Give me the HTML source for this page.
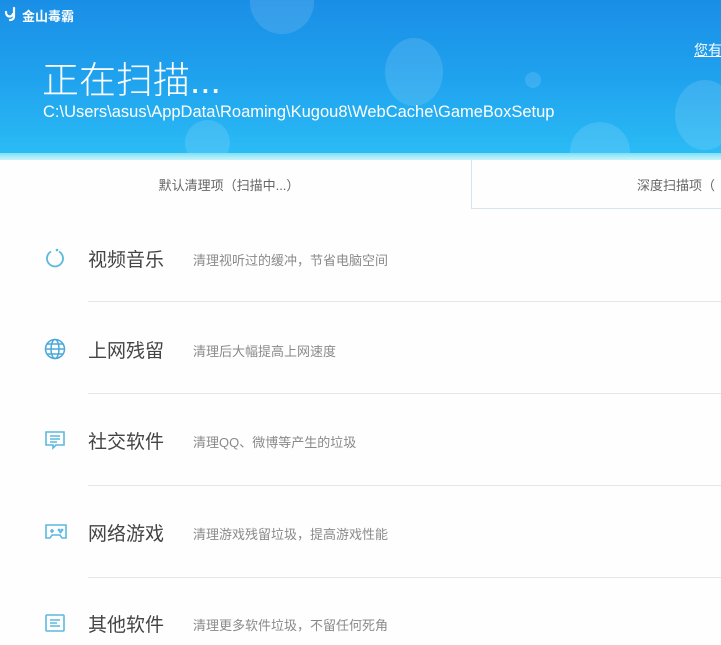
<!DOCTYPE html>
<html><head><meta charset="utf-8"><style>
body{margin:0;width:721px;height:645px;overflow:hidden;background:#fefefe;font-family:"Liberation Sans","Noto Sans CJK SC",sans-serif;position:relative}
.hdr{position:absolute;left:0;top:0;width:721px;height:156px;background:linear-gradient(180deg,#1a8ee6 0%,#1fa2ee 50%,#2bbcf5 100%);overflow:hidden}
.strip{position:absolute;left:0;top:153px;width:721px;height:7px;background:linear-gradient(180deg,#7fe0f6,#c8f4fb)}
.b{position:absolute;border-radius:50%;background:rgba(255,255,255,0.12)}
.logo{position:absolute;left:22px;top:6px;color:#fff;font-size:13px;font-weight:bold;white-space:nowrap}
.t{position:absolute;left:42px;top:50px;color:#fff;font-size:37px;font-weight:300;letter-spacing:0px;white-space:nowrap}
.p{position:absolute;left:43px;top:103px;color:#fff;font-size:16.5px;white-space:nowrap}
.r{position:absolute;left:694px;top:40px;color:#fff;font-size:14px;text-decoration:underline;white-space:nowrap}
.tab1{position:absolute;left:0;top:160px;width:458px;height:50px;line-height:52px;text-align:center;color:#666;font-size:13px}
.tab2{position:absolute;left:471px;top:160px;width:260px;height:49px;border-left:1px solid #d8e4ea;border-bottom:1px solid #d8e4ea;line-height:52px;color:#666;font-size:13px;padding-left:165px;box-sizing:border-box;white-space:nowrap}
.row{position:absolute;left:0;width:721px}
.ic{position:absolute;left:44px;top:-11px}
.nm{position:absolute;left:88px;top:-13px;font-size:19px;color:#444}
.ds{position:absolute;left:193px;top:-8px;font-size:13px;color:#8a8a8a}
.sep{position:absolute;left:88px;width:633px;height:1px;background:#e6e6e6}
</style></head><body>
<div class="hdr">
<div class="b" style="left:250px;top:-30px;width:64px;height:64px"></div>
<div class="b" style="left:385px;top:38px;width:58px;height:68px"></div>
<div class="b" style="left:525px;top:72px;width:16px;height:16px"></div>
<div class="b" style="left:675px;top:80px;width:60px;height:70px"></div>
<div class="b" style="left:570px;top:122px;width:60px;height:60px"></div>
<div class="b" style="left:185px;top:120px;width:45px;height:45px"></div>
<svg style="position:absolute;left:4px;top:6px" width="16" height="16" viewBox="0 0 16 16" fill="none" stroke="#fff" stroke-width="2.2" stroke-linecap="round"><path d="M2 6c0 5 5 6 7 2M10 2v8c0 3-2 4-4 4"/></svg>
<div class="logo">金山毒霸</div>
<div class="t">正在扫描...</div>
<div class="p">C:\Users\asus\AppData\Roaming\Kugou8\WebCache\GameBoxSetup</div>
<div class="r">您有</div>
</div>
<div class="strip"></div>
<div class="tab1">默认清理项（扫描中...）</div>
<div class="tab2">深度扫描项（</div>

<div class="row" style="top:258px">
<svg class="ic" width="22" height="22" viewBox="0 0 22 22"><path d="M7 4.5A8 8 0 1 0 15 4.5" fill="none" stroke="#5bb8df" stroke-width="1.8"/><circle cx="13" cy="3" r="1.3" fill="#5bb8df"/></svg>
<div class="nm">视频音乐</div><div class="ds">清理视听过的缓冲，节省电脑空间</div></div>
<div class="sep" style="top:301px"></div>
<div class="row" style="top:349px">
<svg class="ic" width="22" height="22" viewBox="0 0 22 22" fill="none" stroke="#4aa8d8" stroke-width="1.5"><circle cx="11" cy="11" r="9.5"/><ellipse cx="11" cy="11" rx="4" ry="9.5"/><path d="M1.5 11h19M3 6h16M3 16h16"/></svg>
<div class="nm">上网残留</div><div class="ds">清理后大幅提高上网速度</div></div>
<div class="sep" style="top:393px"></div>
<div class="row" style="top:440px">
<svg class="ic" width="22" height="22" viewBox="0 0 22 22" fill="none" stroke="#5bb8df" stroke-width="1.6"><path d="M2 3h18v13h-8l-3 3v-3H2z"/><path d="M6 7h10M6 10h10M6 13h7"/></svg>
<div class="nm">社交软件</div><div class="ds">清理QQ、微博等产生的垃圾</div></div>
<div class="sep" style="top:485px"></div>
<div class="row" style="top:532px">
<svg class="ic" width="24" height="22" viewBox="0 0 24 22" fill="none" stroke="#5bb8df" stroke-width="1.6"><path d="M2 4h20v13h-4l-2-3H8l-2 3H2z"/><path d="M6 10h4M8 8v4"/><circle cx="15" cy="9" r=".6"/><circle cx="18" cy="9" r=".6"/><circle cx="16.5" cy="11" r=".6"/></svg>
<div class="nm">网络游戏</div><div class="ds">清理游戏残留垃圾，提高游戏性能</div></div>
<div class="sep" style="top:577px"></div>
<div class="row" style="top:623px">
<svg class="ic" width="22" height="22" viewBox="0 0 22 22" fill="none" stroke="#5bb8df" stroke-width="1.6"><rect x="2" y="3" width="18" height="16" rx="1"/><path d="M6 8h10M6 11h7M6 14h10"/></svg>
<div class="nm">其他软件</div><div class="ds">清理更多软件垃圾，不留任何死角</div></div>
</body></html>
